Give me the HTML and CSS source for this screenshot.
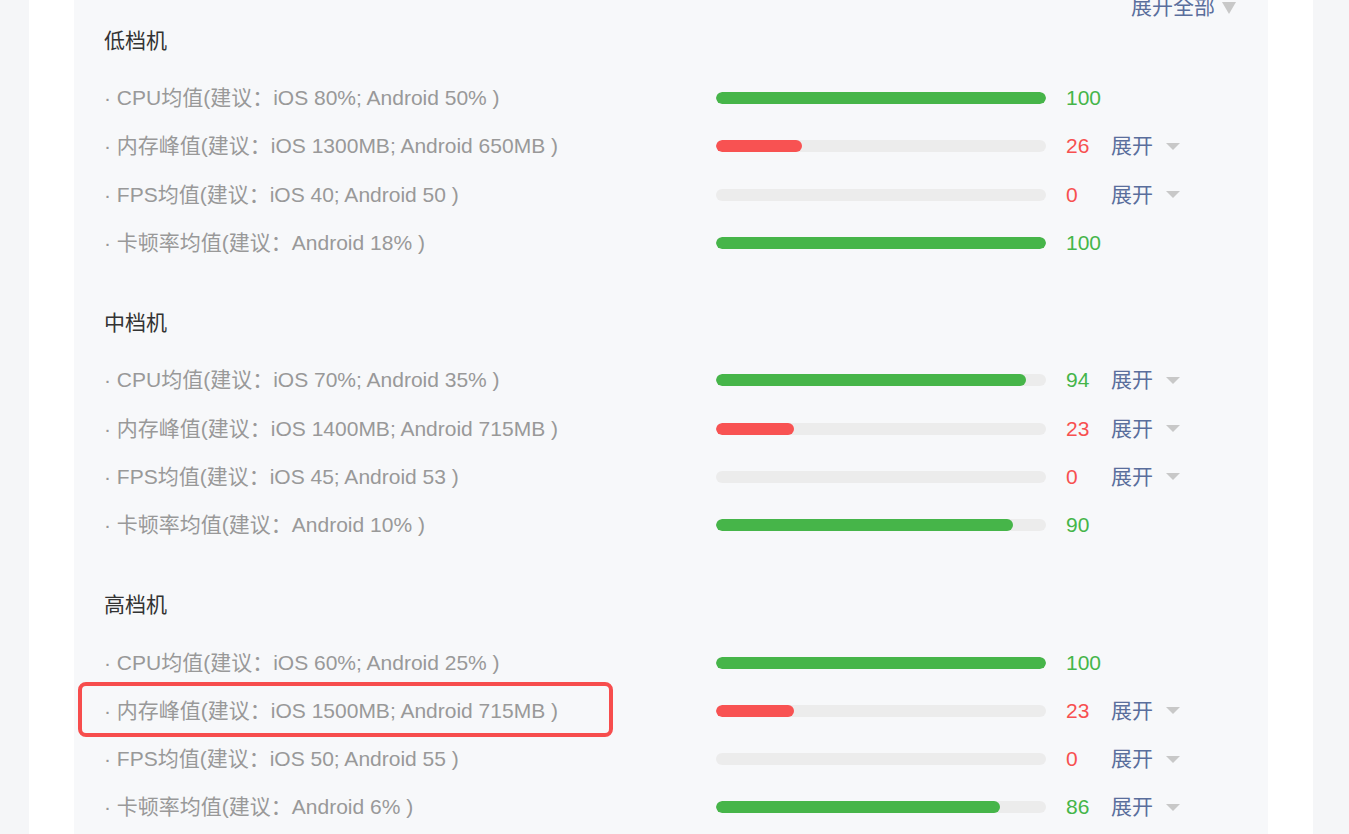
FILE: index.html
```html
<!DOCTYPE html>
<html lang="zh-CN">
<head>
<meta charset="utf-8">
<title>性能评分</title>
<link rel="stylesheet" href="styles.css">
</head>
<body>
<div class="card">
  <div class="panel">
    <div class="toolbar"><span class="expand-all">展开全部<i class="tri tri-big"></i></span></div>

    <section class="tier">
      <h3 class="tier-title">低档机</h3>
      <div class="row"><div class="label">· CPU均值(建议：iOS 80%; Android 50% )</div><div class="bar"><div class="fill ok" style="width:100%"></div></div><div class="val ok">100</div></div>
      <div class="row"><div class="label">· 内存峰值(建议：iOS 1300MB; Android 650MB )</div><div class="bar"><div class="fill bad" style="width:26%"></div></div><div class="val bad">26</div><div class="more">展开<i class="tri"></i></div></div>
      <div class="row"><div class="label">· FPS均值(建议：iOS 40; Android 50 )</div><div class="bar"><div class="fill bad" style="width:0%"></div></div><div class="val bad">0</div><div class="more">展开<i class="tri"></i></div></div>
      <div class="row"><div class="label">· 卡顿率均值(建议：Android 18% )</div><div class="bar"><div class="fill ok" style="width:100%"></div></div><div class="val ok">100</div></div>
    </section>

    <section class="tier">
      <h3 class="tier-title">中档机</h3>
      <div class="row"><div class="label">· CPU均值(建议：iOS 70%; Android 35% )</div><div class="bar"><div class="fill ok" style="width:94%"></div></div><div class="val ok">94</div><div class="more">展开<i class="tri"></i></div></div>
      <div class="row"><div class="label">· 内存峰值(建议：iOS 1400MB; Android 715MB )</div><div class="bar"><div class="fill bad" style="width:23.5%"></div></div><div class="val bad">23</div><div class="more">展开<i class="tri"></i></div></div>
      <div class="row"><div class="label">· FPS均值(建议：iOS 45; Android 53 )</div><div class="bar"><div class="fill bad" style="width:0%"></div></div><div class="val bad">0</div><div class="more">展开<i class="tri"></i></div></div>
      <div class="row"><div class="label">· 卡顿率均值(建议：Android 10% )</div><div class="bar"><div class="fill ok" style="width:90%"></div></div><div class="val ok">90</div></div>
    </section>

    <section class="tier">
      <h3 class="tier-title">高档机</h3>
      <div class="row"><div class="label">· CPU均值(建议：iOS 60%; Android 25% )</div><div class="bar"><div class="fill ok" style="width:100%"></div></div><div class="val ok">100</div></div>
      <div class="row"><div class="label">· 内存峰值(建议：iOS 1500MB; Android 715MB )<span class="highlight"></span></div><div class="bar"><div class="fill bad" style="width:23.5%"></div></div><div class="val bad">23</div><div class="more">展开<i class="tri"></i></div></div>
      <div class="row"><div class="label">· FPS均值(建议：iOS 50; Android 55 )</div><div class="bar"><div class="fill bad" style="width:0%"></div></div><div class="val bad">0</div><div class="more">展开<i class="tri"></i></div></div>
      <div class="row"><div class="label">· 卡顿率均值(建议：Android 6% )</div><div class="bar"><div class="fill ok" style="width:86%"></div></div><div class="val ok">86</div><div class="more">展开<i class="tri"></i></div></div>
    </section>
  </div>
</div>
</body>
</html>
```

FILE: styles.css
```css
* { box-sizing: border-box; }
html, body {
  margin: 0;
  padding: 0;
  background: #f5f6f8;
  height: 100%;
  overflow: hidden;
}
body {
  font-family: "Liberation Sans", "Noto Sans CJK SC", sans-serif;
  font-size: 21px;
}
.card {
  margin-left: 29px;
  width: 1284px;
  min-height: 100%;
  background: #ffffff;
  padding: 0 45px;
}
.panel {
  background: #f7f8fa;
  min-height: 834px;
  padding: 0 32px 0 30px;
}
.toolbar {
  height: 19px;
  display: flex;
  justify-content: flex-end;
  align-items: flex-end;
}
.expand-all {
  display: flex;
  align-items: center;
  line-height: 24px;
  color: #5a6e9c;
}
.tri {
  display: inline-block;
  width: 0;
  height: 0;
  border-left: 7px solid transparent;
  border-right: 7px solid transparent;
  border-top: 7px solid #c8c8c8;
  margin-left: 13px;
}
.tri-big {
  border-top-width: 12px;
  margin-left: 7px;
  margin-top: 2px;
}
.tier {
  padding-top: 7px;
  padding-bottom: 34px;
}
.tier-title {
  margin: 0 0 18px;
  font-weight: normal;
  font-size: 21px;
  line-height: 30px;
  color: #333333;
}
.row {
  display: flex;
  align-items: center;
  height: 48.3px;
  line-height: 24px;
}
.label {
  position: relative;
  width: 612px;
  flex: none;
  color: #999999;
  white-space: nowrap;
}
.bar {
  width: 330px;
  height: 12px;
  border-radius: 6px;
  background: #ececec;
  flex: none;
  overflow: hidden;
}
.fill {
  height: 100%;
  border-radius: 6px;
}
.fill.ok { background: #46b549; }
.fill.bad { background: #f85252; }
.val {
  width: 45px;
  margin-left: 20px;
  flex: none;
}
.val.ok { color: #45b549; }
.val.bad { color: #f75050; }
.more {
  display: flex;
  align-items: center;
  color: #5a6e9c;
}
.highlight {
  position: absolute;
  left: -26px;
  top: -17px;
  width: 535px;
  height: 55px;
  border: 4px solid #f74d4d;
  border-radius: 8px;
}
```
